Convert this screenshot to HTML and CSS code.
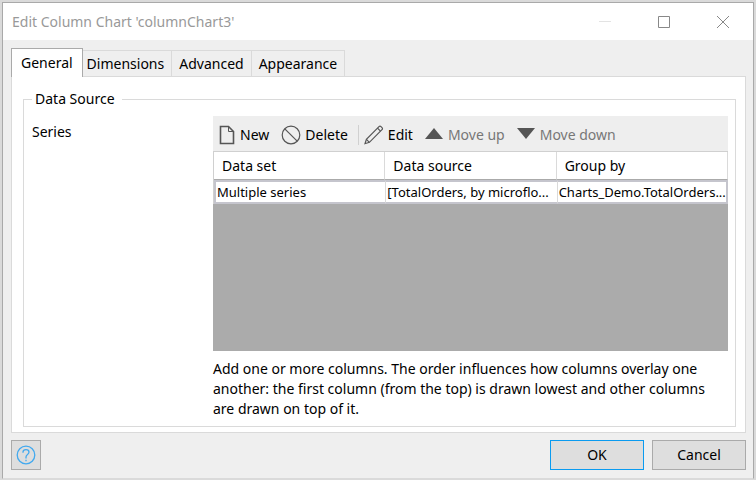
FILE: index.html
```html
<!DOCTYPE html>
<html lang="en">
<head>
<meta charset="utf-8">
<title>Edit Column Chart</title>
<link rel="stylesheet" href="styles.css">
</head>
<body>
<main class="dialog">
  <header class="titlebar">
    <h1>Edit Column Chart 'columnChart3'</h1>
    <div class="window-controls">
      <button class="dim" aria-label="Minimize" disabled><svg width="12" height="12" viewBox="0 0 12 12"><path d="M0 5.500h12"/></svg></button>
      <button aria-label="Maximize"><svg width="12" height="12" viewBox="0 0 12 12"><path d="M.5.5h11v11H.5z"/></svg></button>
      <button aria-label="Close"><svg width="12" height="12" viewBox="0 0 12 12"><path d="M0 0l12 12M12 0L0 12"/></svg></button>
    </div>
  </header>
  <div class="content">
    <div class="tabs" role="tablist">
      <button class="tab active" role="tab" aria-selected="true">General</button>
      <button class="tab" role="tab">Dimensions</button>
      <button class="tab" role="tab">Advanced</button>
      <button class="tab" role="tab">Appearance</button>
    </div>
    <section class="panel" role="tabpanel">
      <fieldset class="group">
        <legend>Data Source</legend>
        <div class="field">
          <div class="field-label" id="series">Series</div>
          <div class="field-body">
            <div class="grid-box">
              <div class="toolbar">
                <button class="tool"><svg width="18" height="20" viewBox="0 0 18 20"><path d="M2.500 1.500h8l5 5v12h-13z" stroke-width="1.600"/><path d="M10.500 1.500v5h5" stroke-width="1"/></svg>New</button>
                <button class="tool"><svg width="20" height="20" viewBox="0 0 20 20"><circle cx="10" cy="10" r="8.800" stroke-width="1.200"/><path d="M3.800 3.800l12.400 12.400" stroke-width="1.200"/></svg>Delete</button>
                <span class="divider"></span>
                <button class="tool"><svg width="20" height="20" viewBox="0 0 20 20" stroke-width="1.200"><path d="M1 18.700l1.400-4.400L15 1.700q1-1 2 0l1 1q1 1 0 2L5.400 17.300z"/><path d="M2.400 14.300l3 3M13.500 3.200l3 3"/></svg>Edit</button>
                <button class="tool" disabled><svg width="18" height="20" viewBox="0 0 18 20"><path class="solid" d="M0 14L9 3l9 11z"/></svg>Move up</button>
                <button class="tool" disabled><svg width="18" height="20" viewBox="0 0 18 20"><path class="solid" d="M0 3h18L9 14z"/></svg>Move down</button>
              </div>
              <table class="series" aria-labelledby="series">
                <thead><tr><th>Data set</th><th>Data source</th><th>Group by</th></tr></thead>
                <tbody><tr><td>Multiple series</td><td>[TotalOrders, by microflo...</td><td>Charts_Demo.TotalOrders...</td></tr></tbody>
              </table>
            </div>
            <p class="hint">Add one or more columns. The order influences how columns overlay one another: the first column (from the top) is drawn lowest and other columns are drawn on top of it.</p>
          </div>
        </div>
      </fieldset>
    </section>
  </div>
  <footer class="actions">
    <button class="help" aria-label="Help"><svg width="20" height="20" viewBox="0 0 20 20"><circle cx="10" cy="10" r="8.800"/><path d="M7 7.700V7q0-2.300 3-2.300T13 7q0 1.400-1.500 2.500T10 12v1.500M10 14.800v1.500"/></svg></button>
    <button class="push default">OK</button>
    <button class="push">Cancel</button>
  </footer>
</main>
</body>
</html>
```
FILE: styles.css
```css
* {
  box-sizing: border-box;
}

body {
  margin: 0;
  min-height: 100vh;
  padding: 2px;
  display: flex;
  background: #dadada;
  color: #000;
  font: 14px/20px "Segoe UI", "Noto Sans", "Open Sans", sans-serif;
}

button {
  font: inherit;
  color: inherit;
  margin: 0;
  padding: 0;
  border: 0;
  background: none;
}

svg {
  display: block;
  flex: none;
  fill: none;
  stroke: #555;
}

.dialog {
  flex: 1;
  display: flex;
  flex-direction: column;
  min-width: 0;
  border: 1px solid #a9a9a9;
  border-bottom-color: #dadada;
  background: #efefef;
}

.titlebar {
  display: flex;
  align-items: center;
  justify-content: space-between;
  height: 37px;
  padding: 0 1px 0 9px;
  background: #fff;
}

.titlebar h1 {
  margin: 0;
  font-size: 14px;
  font-weight: 400;
  color: #999;
}

.window-controls {
  display: flex;
}

.window-controls button {
  display: grid;
  place-items: center;
  width: 59px;
  height: 36px;
}

.window-controls svg {
  stroke: #888;
}

.window-controls .dim svg {
  stroke: #e3e3e3;
}

.content {
  flex: 1;
  display: flex;
  flex-direction: column;
  padding: 8px 7px 0 8px;
}

.tabs {
  display: flex;
  align-items: flex-end;
}

.tab {
  height: 26px;
  padding: 0 7px;
  border: 1px solid #dadada;
  border-bottom: 0;
  border-left-width: 0;
}

.tab.active {
  position: relative;
  z-index: 1;
  height: 29px;
  margin: 0 -3px -1px 0;
  padding: 0 9px;
  border-color: #aaa;
  border-left-width: 1px;
  background: #fff;
}

.panel {
  flex: 1;
  display: flex;
  padding: 12px 9px 5px 11px;
  border: 1px solid #dadada;
  background: #fff;
}

.group {
  flex: 1;
  min-width: 0;
  margin: 0;
  padding: 7px 7px 7px 8px;
  border: 1px solid #dadada;
}

.group legend {
  padding: 0 7px 0 3px;
}

.field {
  display: grid;
  grid-template-columns: 181px 1fr;
}

.field-label {
  padding-top: 6px;
}

.grid-box {
  min-height: 235px;
  background: #ababab;
}

.toolbar {
  display: flex;
  align-items: center;
  height: 35px;
  padding: 2px 5px 0;
  gap: 12px;
  background: #eee;
}

.tool {
  display: flex;
  align-items: center;
  gap: 4px;
  white-space: nowrap;
}

.tool:disabled {
  gap: 5px;
  color: #777;
}

.solid {
  fill: #555;
  stroke: none;
}

.divider {
  width: 1px;
  height: 20px;
  margin: 0 -7px 0 -2px;
  background: #d0d0d0;
}

.series {
  width: 100%;
  table-layout: fixed;
  border-collapse: separate;
  border-spacing: 0;
  border-left: 1px solid #d0d0d0;
  border-top: 1px solid #d0d0d0;
}

.series th {
  height: 28px;
  padding: 1px 8px 0;
  border-right: 1px solid #dadada;
  border-bottom: 1px solid #aaa;
  background: #fff;
  font-weight: 400;
  text-align: left;
}

.series td {
  height: 24px;
  padding: 0 2px;
  overflow: hidden;
  border: solid #c5c5cd;
  border-width: 2px 0;
  background: #fff;
  font-size: 13px;
  white-space: nowrap;
}

.series td + td {
  padding-left: 1px;
  border-left: 1px solid #dadada;
}

.series td:first-child {
  border-left: 2px solid #c5c5cd;
  padding-left: 1px;
}

.series td:last-child {
  border-right: 2px solid #c5c5cd;
}

.hint {
  margin: 8px 0 0;
}

.actions {
  display: flex;
  gap: 8px;
  padding: 7px 7px 8px 8px;
}

.help,
.push {
  height: 30px;
  border: 1px solid #aaa;
  background: #dedede;
}

.help {
  width: 30px;
  display: grid;
  place-items: center;
  margin-right: auto;
}

.help svg {
  stroke: #42a9ef;
  stroke-width: 1.3;
}

.push {
  width: 94px;
}

.default {
  border-color: #0a9bf0;
}
```
